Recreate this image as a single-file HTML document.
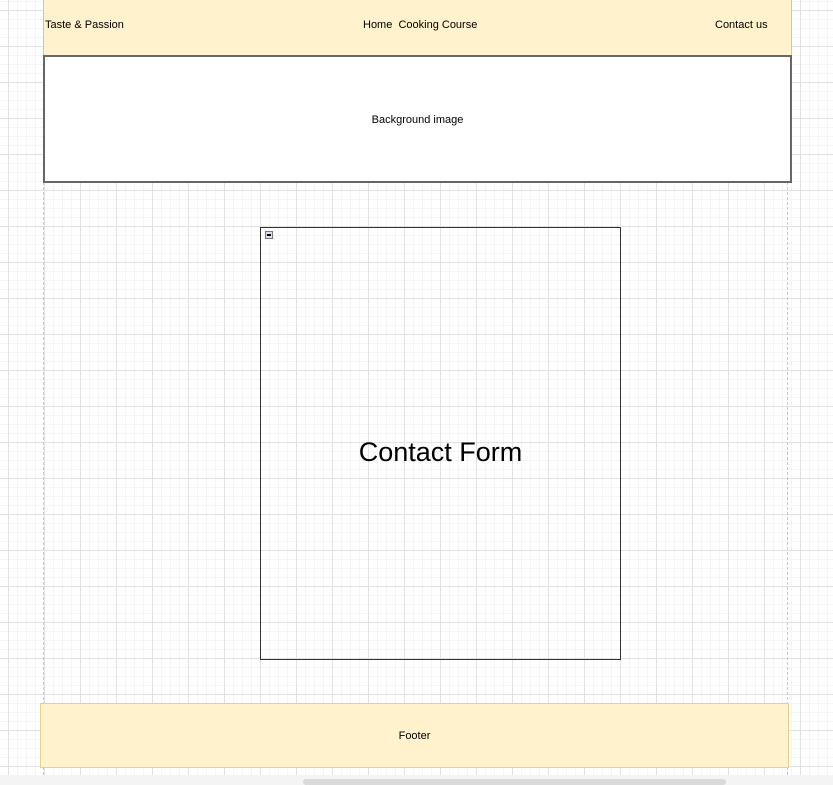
<!DOCTYPE html>
<html><head><style>
html,body{margin:0;padding:0;width:833px;height:785px;overflow:hidden;background:#fff;font-family:"Liberation Sans",Arial,sans-serif;}
.grid{position:absolute;left:0;top:0;width:833px;height:785px;
background-image:
linear-gradient(to right,#e2e2e2 1px,transparent 1px),
linear-gradient(to bottom,#e2e2e2 1px,transparent 1px),
linear-gradient(to right,#f5f5f5 1px,transparent 1px),
linear-gradient(to bottom,#f5f5f5 1px,transparent 1px);
background-size:36px 36px,36px 36px,9px 9px,9px 9px;
background-position:8px 10px,8px 10px,8px 10px,8px 10px;}
.a{position:absolute;box-sizing:border-box;}
.t{display:flex;align-items:center;justify-content:center;color:#000;}
</style></head><body>
<div class="grid"></div>
<div class="a" style="left:43px;top:182px;height:593px;border-left:1px dashed #c8c8c8"></div>
<div class="a" style="left:787px;top:182px;height:593px;border-left:1px dashed #c8c8c8"></div>
<div class="a" style="left:43px;top:0;width:749px;height:56px;background:#fff2cc;border:1px solid #e0c777;border-top:none;font-size:11px">
<span class="a" style="left:1px;top:19px">Taste &amp; Passion</span>
<span class="a" style="left:319px;top:19px">Home&nbsp; Cooking Course</span>
<span class="a" style="left:671px;top:19px">Contact us</span>
</div>
<div class="a t" style="left:43px;top:55px;width:749px;height:128px;background:#fff;border:2px solid #666;font-size:11px;padding-top:2px">Background image</div>
<div class="a t" style="left:260px;top:227px;width:361px;height:433px;border:1px solid #333;font-size:27px;padding-top:18px">Contact Form</div>
<div class="a" style="left:265px;top:231px;width:8px;height:8px;background:#dde;border:1px solid #777;box-sizing:border-box"><div style="position:absolute;left:1px;top:2px;width:4px;height:2px;background:#000"></div></div>
<div class="a t" style="left:40px;top:703px;width:749px;height:65px;background:#fff2cc;border:1px solid #e6d08a;font-size:11px">Footer</div>
<div class="a" style="left:0;top:775px;width:833px;height:10px;background:#f4f4f4"></div>
<div class="a" style="left:303px;top:779px;width:423px;height:6px;background:#dadada;border-radius:3px"></div>
</body></html>
